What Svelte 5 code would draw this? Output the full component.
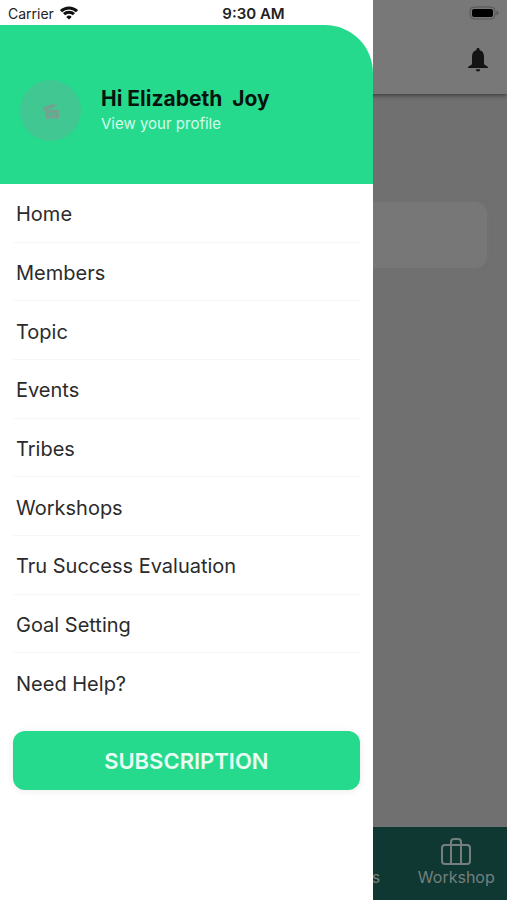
<script>
  let name = "Hi Elizabeth \u00a0Joy";
  let active = "";

  const menu = [
    "Home",
    "Members",
    "Topic",
    "Events",
    "Tribes",
    "Workshops",
    "Tru Success Evaluation",
    "Goal Setting",
    "Need Help?",
  ];

  const openPage = (item) => {
    active = item;
  };
</script>

<div class="screen">
  <!-- Page behind the drawer -->
  <div class="page">
    <header class="page-header">
      <button type="button" class="bell" aria-label="Notifications">
        <svg viewBox="0 0 20 24" width="20" height="24">
          <path
            d="M10 0c-1 0-1.600.7-1.600 1.600v.6C5.200 2.900 4 5.400 4 8.800v7.400L0 19v1h20v-1l-4-2.800V8.800c0-3.400-1.200-5.900-4.400-6.600v-.6C11.600.7 11 0 10 0zM7.800 21.300a2.200 2.200 0 0 0 4.400 0z"
          />
        </svg>
      </button>
    </header>
    <main class="content">
      <div class="card"></div>
    </main>
    <nav class="tabs" aria-label="Tabs">
      <a class="tab" href="#events">Events</a>
      <a class="tab" href="#workshop">
        <svg viewBox="0 0 30 28" width="30" height="28">
          <rect x="1" y="7" width="28" height="19" rx="3" />
          <path d="M10 26V4a3 3 0 0 1 3-3h4a3 3 0 0 1 3 3v22" />
        </svg>
        Workshop
      </a>
    </nav>
  </div>

  <!-- Side drawer -->
  <aside class="drawer">
    <div class="profile">
      <div class="avatar">
        <svg viewBox="0 0 18 18" width="18" height="18">
          <path d="M1 5.500l11.500-4 1.200 3-9.200 3.200H17V16.500H4L3.200 9 1.800 8.500z" />
          <path class="inner" d="M6 10.500h8.500v3.500H6z" />
        </svg>
      </div>
      <div class="profile-text">
        <h1>{name}</h1>
        <a href="#profile">View your profile</a>
      </div>
    </div>

    <nav class="menu" aria-label="Menu">
      {#each menu as item}
        <button type="button" class:active={active === item} on:click={() => openPage(item)}>
          {item}
        </button>
      {/each}
    </nav>

    <button type="button" class="subscribe">SUBSCRIPTION</button>
  </aside>

  <!-- Status bar sits over everything -->
  <div class="status">
    <div class="carrier">
      <span>Carrier</span>
      <svg viewBox="0 0 18 14" width="18" height="14">
        <path d="M1 5.200a11.400 11.400 0 0 1 16 0" />
        <path d="M4 8.200a7.200 7.200 0 0 1 10 0" />
        <path class="dot" d="M9 13.600L6.300 10.900a3.900 3.900 0 0 1 5.400 0z" />
      </svg>
    </div>
    <strong>9:30 AM</strong>
    <svg class="battery" viewBox="0 0 30 14" width="30" height="14">
      <rect class="shell" x="1" y="1" width="25" height="12" rx="4" />
      <rect x="3" y="3" width="21" height="8" rx="2" />
      <path class="tip" d="M27.500 4.500c2.500 1 2.500 4 0 5z" />
    </svg>
  </div>
</div>

<style>
  :global(body) {
    margin: 0;
  }

  .screen {
    position: relative;
    min-height: 100vh;
    font-family: Inter, "Liberation Sans", sans-serif;
    overflow: hidden;
  }

  button {
    border: none;
    background: none;
    font-family: inherit;
    cursor: pointer;
  }

  a {
    text-decoration: none;
  }

  svg {
    display: block;
  }

  .page {
    display: flex;
    flex-direction: column;
    min-height: 100vh;
    background-color: #707070;
  }

  .page-header {
    display: flex;
    justify-content: flex-end;
    align-items: flex-end;
    box-sizing: border-box;
    height: 94px;
    padding: 0 19px 22px;
    background-color: #787878;
    box-shadow: 0 2px 4px rgba(0, 0, 0, 0.4);
  }

  .bell {
    padding: 0;
    fill: #141414;
  }

  .content {
    flex: 1;
    padding: 108px 20px 20px;
  }

  .card {
    height: 66px;
    border-radius: 12px;
    background-color: #777777;
    box-shadow: 0 0 4px rgba(120, 120, 120, 0.5);
  }

  .tabs {
    display: flex;
    justify-content: flex-end;
    height: 73px;
    background-color: #0e3831;
  }

  .tab {
    display: flex;
    flex-direction: column;
    justify-content: flex-end;
    align-items: center;
    gap: 1px;
    box-sizing: border-box;
    width: 20%;
    padding-bottom: 13px;
    color: #75807e;
    font-size: 16px;
    line-height: 20px;
  }

  .tab svg {
    fill: none;
    stroke: #75807e;
    stroke-width: 2;
  }

  /* Drawer */
  .drawer {
    position: absolute;
    top: 0;
    left: 0;
    box-sizing: border-box;
    width: 73.5%;
    min-height: 100%;
    padding-top: 25px;
    background-color: #fff;
  }

  .profile {
    display: flex;
    align-items: center;
    gap: 20px;
    box-sizing: border-box;
    height: 159px;
    padding: 12px 20px 0;
    border-top-right-radius: 48px;
    background-color: #26da8d;
  }

  .avatar {
    display: flex;
    justify-content: center;
    align-items: center;
    width: 61px;
    height: 61px;
    border-radius: 50%;
    background-color: #40c792;
  }

  .avatar svg {
    fill: #76a08f;
  }

  .avatar .inner {
    fill: #5cb091;
  }

  .profile-text h1 {
    margin: 0;
    color: #06140d;
    font-size: 21px;
    font-weight: 700;
    line-height: 26px;
  }

  .profile-text a {
    display: block;
    color: #d5fae9;
    font-size: 15px;
    line-height: 24px;
  }

  .menu {
    display: grid;
    grid-auto-rows: 1fr;
    height: 528px;
    margin: 0 13px;
  }

  .menu button {
    padding: 3px 3px 0;
    border-bottom: 1px solid #f7f7f7;
    color: #2b2b2b;
    font-size: 20px;
    text-align: left;
  }

  .menu button:last-child {
    border-bottom-color: transparent;
  }

  .menu button.active {
    color: #26da8d;
  }

  .subscribe {
    display: block;
    width: calc(100% - 26px);
    height: 59px;
    margin: 19px 13px;
    border-radius: 12px;
    background-color: #26da8d;
    box-shadow: 0 1px 8px rgba(0, 0, 0, 0.08);
    color: #e9fdf4;
    font-size: 22px;
    font-weight: 600;
  }

  /* Status bar */
  .status {
    position: absolute;
    top: 0;
    left: 0;
    right: 0;
    display: grid;
    grid-template-columns: 1fr auto 1fr;
    align-items: center;
    height: 26px;
    padding: 0 8px;
    color: #222;
    font-size: 14px;
  }

  .carrier {
    display: flex;
    align-items: center;
    gap: 6px;
  }

  .carrier svg {
    fill: none;
    stroke: #111;
    stroke-width: 3;
  }

  .carrier .dot {
    fill: #111;
    stroke: none;
  }

  .status strong {
    font-size: 15px;
    font-weight: 600;
  }

  .battery {
    justify-self: end;
  }

  .battery .shell {
    fill: none;
    stroke: #555;
    stroke-width: 1;
  }

  .battery .tip {
    fill: #555;
  }
</style>
